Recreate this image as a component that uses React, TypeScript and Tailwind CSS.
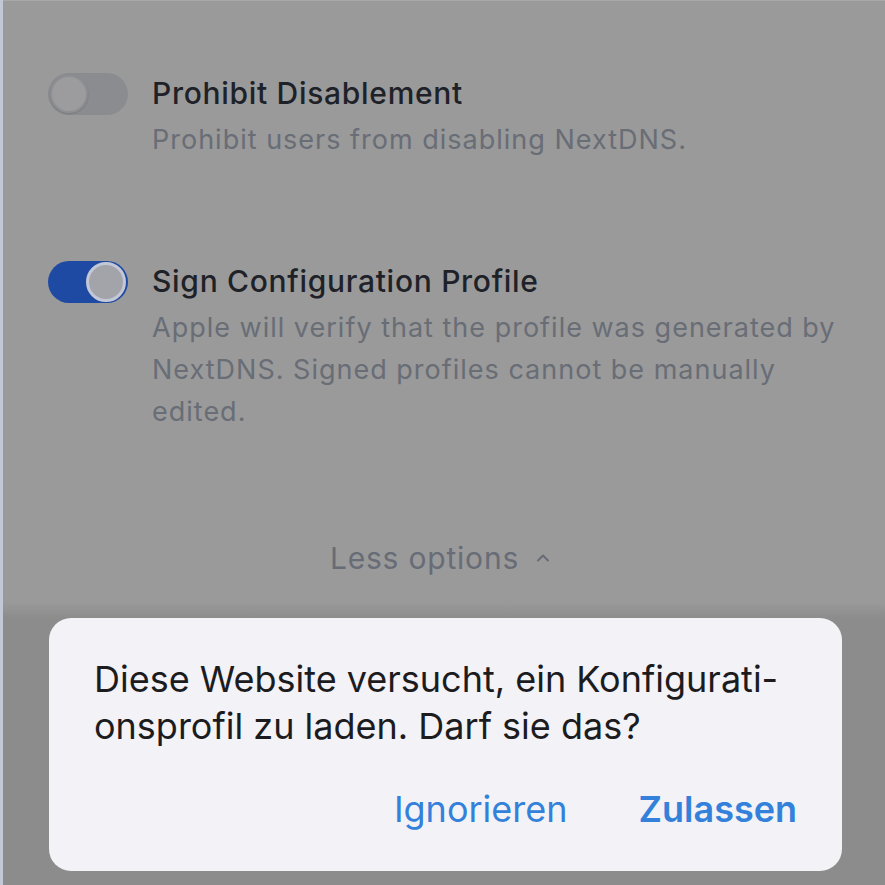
import { ChevronUp } from 'lucide-react';

interface ToggleProps {
  on?: boolean
}

function Toggle({ on }: ToggleProps) {
  return (
    <div
      className={`flex h-[42px] w-[80px] shrink-0 items-center rounded-full px-[2px] ${
        on ? 'justify-end bg-[#1f4aa3]' : 'justify-start bg-[#8a8c90]'
      }`}
    >
      <div
        className={`rounded-full ${
          on
            ? 'h-[40px] w-[40px] border-[3px] border-[#c3c7d6] bg-[#a3a4aa]'
            : 'h-[38px] w-[38px] border-2 border-[#8e8f93] bg-[#9c9c9e] shadow-[0_1px_2px_rgba(0,0,0,0.15)]'
        }`}
      />
    </div>
  );
}

interface SettingProps {
  title: string
  description: string
  on?: boolean
}

function Setting({ title, description, on }: SettingProps) {
  return (
    <div className="flex items-start gap-[24px]">
      <Toggle on={on} />
      <div className="flex flex-col">
        <div className="text-[30px] font-medium leading-[41px] tracking-[0.7px] text-[#1e2228]">{title}</div>
        <div className="mt-[5px] text-[27px] leading-[42px] tracking-[1px] text-[#686d76]">{description}</div>
      </div>
    </div>
  );
}

export default function App() {
  return (
    <div
      className="flex h-[885px] w-[885px] overflow-hidden bg-[#9a9a9a]"
      style={{ fontFamily: 'Inter, "Noto Sans", sans-serif' }}
    >
      <div className="w-[3px] shrink-0 bg-[#c3c9d4]" />
      <div className="flex flex-1 flex-col border-t border-[#a9a9ab]">
        <div className="flex flex-col pl-[45px] pr-[36px] pt-[72px]">
          <Setting
            title="Prohibit Disablement"
            description="Prohibit users from disabling NextDNS."
          />
          <div className="h-[100px]" />
          <Setting
            on
            title="Sign Configuration Profile"
            description="Apple will verify that the profile was generated by NextDNS. Signed profiles cannot be manually edited."
          />
          <div className="mt-[105px] flex items-center justify-center gap-[14px] pr-[14px] text-[30px] leading-[40px] tracking-[0.8px] text-[#676c76]">
            <span>Less options</span>
            <ChevronUp size={20} strokeWidth={2.5} />
          </div>
        </div>

        <div className="mt-[24px] flex flex-1 flex-col bg-gradient-to-b from-[#9a9a9a] to-[#8c8c8c] to-[16px] pl-[46px] pr-[43px] pt-[16px]">
          <div className="flex h-[253px] flex-col rounded-[22px] bg-[#f2f2f7] px-[45px] pt-[38px]">
            <p className="text-[36px] leading-[47px] text-[#1c1c1e]">
              Diese Website versucht, ein Konfigurati-
              <br />
              onsprofil zu laden. Darf sie das?
            </p>
            <div className="mt-[38px] flex justify-end gap-[71px] text-[36px] leading-[42px] text-[#3381da]">
              <span>Ignorieren</span>
              <span className="font-semibold">Zulassen</span>
            </div>
          </div>
        </div>
      </div>
    </div>
  );
}
